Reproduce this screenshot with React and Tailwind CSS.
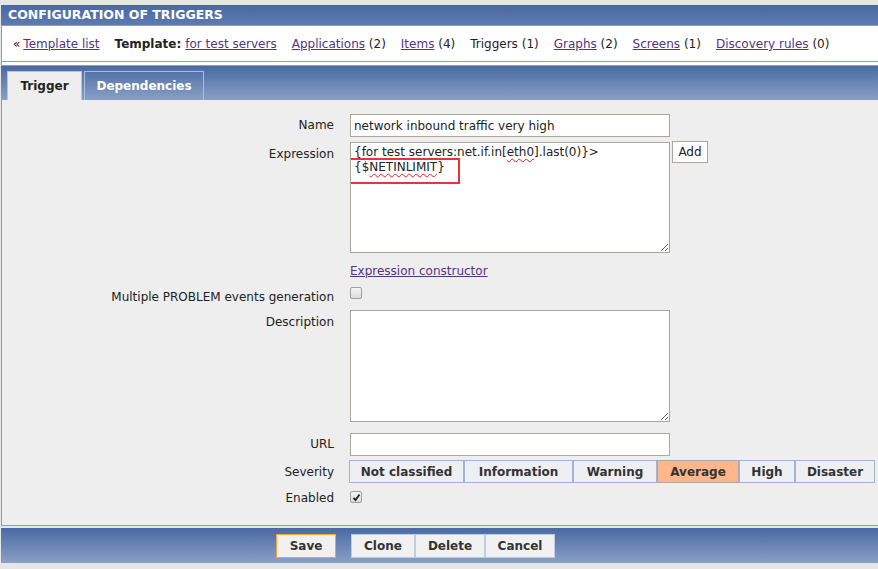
import React from "react";

const links = [
  { label: "Applications", count: "(2)" },
  { label: "Items", count: "(4)" },
  { label: "Triggers", count: "(1)", plain: true },
  { label: "Graphs", count: "(2)" },
  { label: "Screens", count: "(1)" },
  { label: "Discovery rules", count: "(0)" },
];

const severities = [
  { name: "Not classified", w: "w-[115px]" },
  { name: "Information", w: "w-[109px]" },
  { name: "Warning", w: "w-[84px]" },
  { name: "Average", w: "w-[82px]", active: true },
  { name: "High", w: "w-[56px]" },
  { name: "Disaster", w: "w-[80px]" },
];

function Row({ label, labelPad = "", className = "", children }) {
  return (
    <div className={"flex " + className}>
      <div className={"w-[332px] shrink-0 text-right text-[12px] text-[#222] " + labelPad}>{label}</div>
      <div className="ml-[16px] flex items-start">{children}</div>
    </div>
  );
}

function Checkbox({ checked }) {
  return (
    <div className="mt-[2px] flex h-[12px] w-[12px] items-center justify-center rounded-[2px] border border-[#a0a0a0] bg-gradient-to-b from-[#f4f4f4] to-[#dcdcdc]">
      {checked && (
        <svg width="9" height="9" viewBox="0 0 9 9">
          <path d="M1.5 4.8 L3.5 7 L7.5 1.5" stroke="#222" strokeWidth="1.8" fill="none" />
        </svg>
      )}
    </div>
  );
}

export default function App() {
  return (
    <div className="h-[569px] w-[878px] overflow-hidden bg-[#e6e6e6] font-['DejaVu_Sans',sans-serif] text-[11px] leading-[16px] text-[#222]">
      <div className="h-[5px]" />
      {/* title bar */}
      <div className="ml-[1px] flex h-[20px] items-center bg-gradient-to-b from-[#4a69a2] to-[#5e7bb0] pl-[7px] text-[12.5px] font-bold text-white">
        CONFIGURATION OF TRIGGERS
      </div>
      {/* nav */}
      <div className="ml-[1px] border-t border-b border-l border-[#8c9ebd] bg-white">
        <div className="mt-[1px] flex h-[34px] items-center pl-[11px] text-[12px]">
          <span className="mr-[3px]">«</span>
          <a className="text-[#52357f] underline">Template list</a>
          <span className="ml-[15px] font-bold">Template:</span>
          <a className="ml-[4px] text-[#52357f] underline">for test servers</a>
          {links.map((l) => (
            <span key={l.label} className="ml-[15px]">
              {l.plain ? <span>{l.label}</span> : <a className="text-[#52357f] underline">{l.label}</a>} {l.count}
            </span>
          ))}
        </div>
      </div>
      <div className="ml-[1px] h-[4px] border-b border-l border-[#8c9ebd] bg-white" />
      {/* tabs */}
      <div className="ml-[1px] flex h-[34px] items-end bg-gradient-to-b from-[#4a6aa3] to-[#8aa0c6] pl-[6px]">
        <div className="flex h-[29px] w-[75px] items-center justify-center border border-b-0 border-[#b6c3da] bg-[#eeeeee] text-[12px] font-bold text-[#222]">
          Trigger
        </div>
        <div className="ml-[2px] flex h-[29px] w-[120px] items-center justify-center border border-b-0 border-[#a9bde0] text-[12px] font-bold text-white">
          Dependencies
        </div>
      </div>
      {/* form */}
      <div className="ml-[1px] h-[426px] border-b border-l border-[#8c9ebd] bg-[#eeeeee] pt-[14px]">
        <Row label="Name" labelPad="pt-[3px]">
          <div className="flex h-[23px] w-[320px] items-center border border-[#aaa69c] bg-white pl-[3px] text-[12px]">
            network inbound traffic very high
          </div>
        </Row>
        <Row label="Expression" labelPad="pt-[4px]" className="mt-[5px]">
          <div className="relative h-[111px] w-[320px] resize overflow-auto border border-[#aaa69c] bg-white px-[3px] pt-[2px] text-[12px] leading-[15px]">
            <div>
              {"{for test servers:net.if.in["}
              <span className="underline decoration-[#e02020] decoration-wavy decoration-[1px] underline-offset-2">eth0</span>
              {"].last(0)}>"}
            </div>
            <div>
              {"{$"}
              <span className="underline decoration-[#e02020] decoration-wavy decoration-[1px] underline-offset-2">NETINLIMIT</span>
              {"}"}
            </div>
            <div className="absolute left-[-2px] top-[15px] h-[26px] w-[111px] border-2 border-[#e8333a]" />
          </div>
          <div className="ml-[2px] mt-[-1px] flex h-[22px] w-[36px] items-center justify-center border border-[#aaa69c] bg-white text-[12px]">
            Add
          </div>
        </Row>
        <Row label="" className="mt-[9px]">
          <a className="h-[18px] text-[12px] leading-[18px] text-[#52357f] underline">Expression constructor</a>
        </Row>
        <Row label="Multiple PROBLEM events generation" labelPad="pt-[4px]" className="mt-[5px]">
          <Checkbox />
        </Row>
        <Row label="Description" labelPad="pt-[4px]" className="mt-[5px]">
          <div className="h-[112px] w-[320px] resize overflow-auto border border-[#aaa69c] bg-white" />
        </Row>
        <Row label="URL" labelPad="pt-[3px]" className="mt-[11px]">
          <div className="h-[23px] w-[320px] border border-[#aaa69c] bg-white" />
        </Row>
        <Row label="Severity" labelPad="pt-[4px]" className="mt-[4px]">
          <div className="ml-[-1px] flex">
            {severities.map((s) => (
              <div
                key={s.name}
                className={
                  "flex h-[23px] items-center justify-center border text-[12px] font-bold text-[#333] " +
                  s.w +
                  (s.active ? " border-[#a8a8a8] bg-[#ffb68a] text-[#111]" : " border-[#9fb4d8] bg-[#eeeff2]")
                }
              >
                {s.name}
              </div>
            ))}
          </div>
        </Row>
        <Row label="Enabled" labelPad="pt-[1px]" className="mt-[6px]">
          <Checkbox checked />
        </Row>
      </div>
      {/* footer */}
      <div className="ml-[1px] mt-[2px] flex h-[35px] items-center bg-gradient-to-b from-[#4a6aa3] to-[#8aa0c6] pl-[275px]">
        <div className="flex h-[24px] w-[60px] items-center justify-center border border-[#f5a630] bg-[#f1f1f1] text-[12px] font-bold text-[#333]">
          Save
        </div>
        <div className="ml-[15px] flex">
          {["Clone", "Delete", "Cancel"].map((b, i) => (
            <div
              key={b}
              className={
                "flex h-[24px] items-center justify-center border border-[#c0cbe0] bg-[#f1f1f1] text-[12px] font-bold text-[#333] " +
                (i === 0 ? "w-[64px]" : "w-[70px]")
              }
            >
              {b}
            </div>
          ))}
        </div>
      </div>
    </div>
  );
}
